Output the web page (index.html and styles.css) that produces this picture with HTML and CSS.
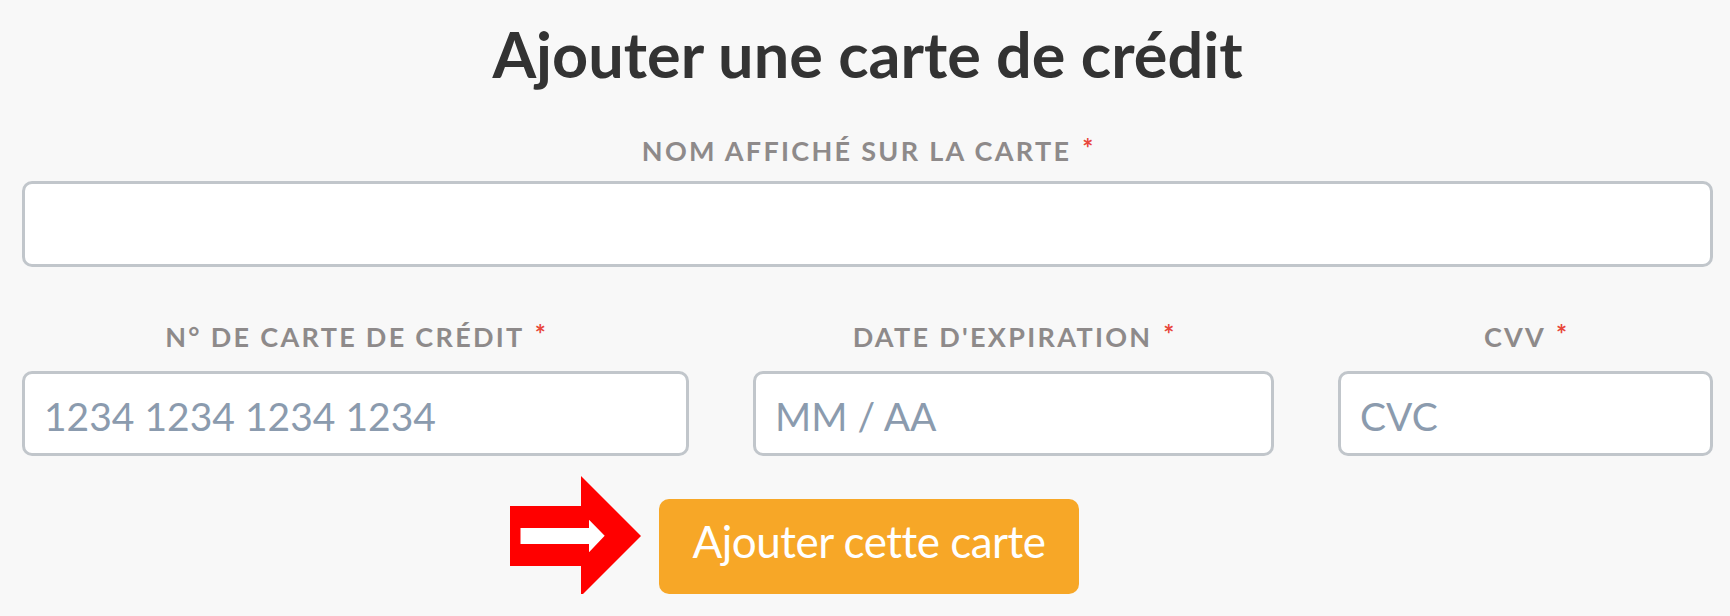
FILE: index.html
```html
<!DOCTYPE html>
<html lang="fr">
<head>
<meta charset="utf-8">
<title>Ajouter une carte de crédit</title>
<link rel="stylesheet" href="styles.css">
</head>
<body>
<main class="page">
  <h1 class="title">Ajouter une carte de crédit</h1>
  <form class="card-form">
    <div class="field field-main">
      <label class="label" for="name">NOM AFFICHÉ SUR LA CARTE <span class="req">*</span></label>
      <input class="input" id="name" type="text">
    </div>
    <div class="row">
      <div class="field">
        <label class="label" for="num">N° DE CARTE DE CRÉDIT <span class="req">*</span></label>
        <input class="input" id="num" type="text" placeholder="1234 1234 1234 1234">
      </div>
      <div class="field">
        <label class="label" for="exp">DATE D'EXPIRATION <span class="req">*</span></label>
        <input class="input" id="exp" type="text" placeholder="MM / AA">
      </div>
      <div class="field">
        <label class="label" for="cvv">CVV <span class="req">*</span></label>
        <input class="input" id="cvv" type="text" placeholder="CVC">
      </div>
    </div>
    <div class="actions">
      <div class="btn-wrap">
        <svg class="arrow" width="132" height="120" viewBox="0 0 132 120" aria-hidden="true">
          <polygon points="0,30 71,30 71,0 131,60 71,120 71,90 0,90" fill="#ff0000"/>
          <polygon points="10.5,52 79,52 79,43.7 94.7,59.7 79,76.3 79,68 10.5,68" fill="#ffffff"/>
        </svg>
        <button class="btn" type="button">Ajouter cette carte</button>
      </div>
    </div>
  </form>
</main>
</body>
</html>
```
FILE: styles.css
```css
html, body {
  margin: 0;
  padding: 0;
  background: #f8f8f8;
}

.page {
  padding: 16px 17px 0 22px;
  font-family: Lato, "Liberation Sans", sans-serif;
}

.title {
  margin: 0;
  text-align: center;
  font-family: Lato, sans-serif;
  font-weight: 700;
  font-size: 63px;
  line-height: 1.2;
  color: #333333;
}

.card-form {
  display: flex;
  flex-direction: column;
  margin-top: 43px;
}

.field {
  display: flex;
  flex-direction: column;
}

.label {
  display: block;
  text-align: center;
  font-family: Lato, sans-serif;
  font-weight: 700;
  font-size: 27px;
  line-height: 1.2;
  letter-spacing: 2.3px;
  color: #8e8a8a;
  margin-bottom: 18px;
}

.field-main .label {
  margin-bottom: 14px;
}

.req {
  display: inline-block;
  margin-left: 2px;
  color: #e8473b;
  font-size: 26px;
  font-weight: 700;
  vertical-align: top;
  line-height: 1;
  letter-spacing: 0;
}

.input {
  box-sizing: border-box;
  width: 100%;
  height: 86px;
  margin: 0;
  padding: 4px 19px 0;
  background: #ffffff;
  border: 3px solid #c1c6cb;
  border-radius: 10px;
  font-family: Lato, sans-serif;
  font-size: 39px;
  color: #55606e;
  outline: none;
}

.input::placeholder {
  color: #8b9bae;
  opacity: 1;
}

.row {
  display: grid;
  grid-template-columns: 667fr 521fr 375fr;
  column-gap: 64px;
  margin-top: 54px;
}

.row .input {
  height: 85px;
}

.actions {
  display: flex;
  justify-content: center;
  margin-top: 43px;
  padding-left: 3px;
}

.btn-wrap {
  position: relative;
}

.arrow {
  position: absolute;
  right: calc(100% + 17px);
  top: -23px;
  display: block;
}

.btn {
  box-sizing: border-box;
  height: 95px;
  padding: 16px 34px 26px;
  border: none;
  border-radius: 10px;
  background: #f7a727;
  color: #ffffff;
  font-family: Lato, sans-serif;
  font-weight: 400;
  font-size: 44px;
  line-height: 1.2;
  letter-spacing: -0.5px;
  cursor: pointer;
}
```
